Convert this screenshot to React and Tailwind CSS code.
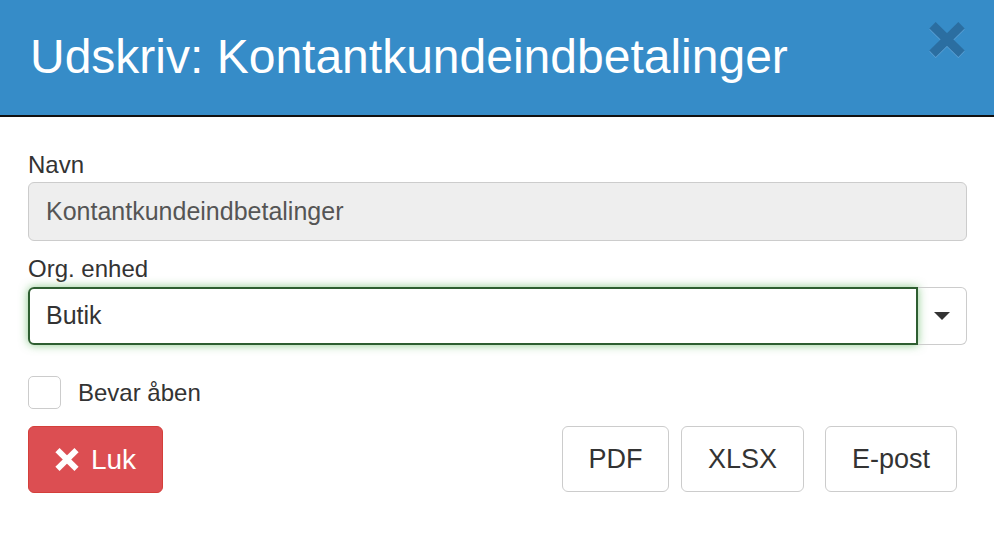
import React, { useState } from "react";

const font = { fontFamily: '"Liberation Sans", Arial, sans-serif' };

// heavy "times" glyph, drawn as two thick strokes
const TimesIcon = ({ className, color, width = 9 }) => (
  <svg viewBox="0 0 36 35" className={className}>
    <line x1="3.5" y1="3.2" x2="32.5" y2="31.8" stroke={color} strokeWidth={width} />
    <line x1="32.5" y1="3.2" x2="3.5" y2="31.8" stroke={color} strokeWidth={width} />
  </svg>
);

const App = () => {
  const [keepOpen, setKeepOpen] = useState(false);

  return (
    <div className="w-[994px] h-[548px] bg-white text-[#333]" style={font}>
      {/* Header */}
      <div className="h-[117px] bg-[#368cc8] border-b-2 border-[#111] flex items-center justify-between pl-[30px] pr-[29px]">
        <h4 className="text-[48px] leading-none text-white pb-[2px]">
          Udskriv: Kontantkundeindbetalinger
        </h4>
        <button className="relative w-[36px] h-[35px] self-start mt-[22px]">
          <TimesIcon className="absolute left-0 top-[1px] w-[36px] h-[35px]" color="#5ea2d6" />
          <TimesIcon className="absolute left-0 top-0 w-[36px] h-[35px]" color="#2b6ea1" />
        </button>
      </div>

      {/* Body */}
      <div className="pt-[32px] pl-[28px] pr-[27px]">
        <label className="block text-[24px] leading-[32px]">Navn</label>
        <div className="mt-px h-[59px] rounded-[6px] border border-[#ccc] bg-[#eee] flex items-center px-[17px] text-[25px] text-[#555]">
          Kontantkundeindbetalinger
        </div>

        <label className="block mt-[12px] text-[24px] leading-[32px]">Org. enhed</label>
        <div className="mt-[2px] h-[58px] flex">
          <div className="flex-1 rounded-l-[6px] border-2 border-[#2e5e31] shadow-[0_0_10px_rgba(90,180,90,0.7)] flex items-center px-[16px] text-[25px] text-[#333]">
            Butik
          </div>
          <div className="w-[49px] rounded-r-[6px] border border-l-0 border-[#ccc] flex items-center justify-center">
            <svg viewBox="0 0 16 8" className="w-[16px] h-[8px]">
              <path d="M0 0 L16 0 L8 8 Z" fill="#333" />
            </svg>
          </div>
        </div>

        <div className="mt-[31px] flex items-center gap-[17px]">
          <button
            onClick={() => setKeepOpen(!keepOpen)}
            className="w-[33px] h-[33px] rounded-[5px] border border-[#ccc] bg-white"
          />
          <span className="text-[24px] leading-[32px]">Bevar åben</span>
        </div>

        <div className="mt-[17px] flex items-start">
          <button className="w-[135px] h-[67px] rounded-[6px] bg-[#dc4e52] border border-[#d43f3a] text-white flex items-center justify-center gap-[12px] text-[28px]">
            <TimesIcon className="w-[24px] h-[23px]" color="#fff" width={9} />
            Luk
          </button>
          <div className="ml-auto mr-[10px] flex">
            <button className="w-[107px] h-[66px] rounded-[6px] border border-[#ccc] bg-white text-[27px] text-[#333]">
              PDF
            </button>
            <button className="ml-[12px] w-[123px] h-[66px] rounded-[6px] border border-[#ccc] bg-white text-[27px] text-[#333]">
              XLSX
            </button>
            <button className="ml-[21px] w-[132px] h-[66px] rounded-[6px] border border-[#ccc] bg-white text-[27px] text-[#333]">
              E-post
            </button>
          </div>
        </div>
      </div>
    </div>
  );
};

export default App;
